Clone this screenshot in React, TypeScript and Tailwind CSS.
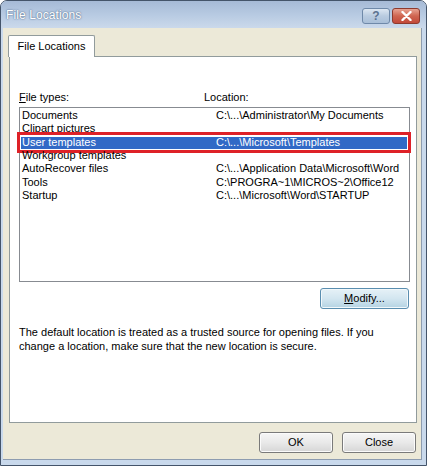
import React from "react";

const rows: [string, string][] = [
  ["Documents", "C:\\...\\Administrator\\My Documents"],
  ["Clipart pictures", ""],
  ["User templates", "C:\\...\\Microsoft\\Templates"],
  ["Workgroup templates", ""],
  ["AutoRecover files", "C:\\...\\Application Data\\Microsoft\\Word"],
  ["Tools", "C:\\PROGRA~1\\MICROS~2\\Office12"],
  ["Startup", "C:\\...\\Microsoft\\Word\\STARTUP"],
];

function Btn({ children, w, hot }: { children: React.ReactNode; w: string; hot?: boolean }) {
  return (
    <div
      className={
        "h-[21px] flex items-center justify-center rounded-[3px] border text-[11px] text-black " +
        w +
        (hot
          ? " border-[#5a8eb0] bg-gradient-to-b from-[#e6f1f7] via-[#d3e6f0] to-[#b4d3e3] shadow-[inset_0_0_0_1px_#f2f8fb]"
          : " border-[#7a7a7a] bg-gradient-to-b from-[#f6f6f6] via-[#e9e9e9] to-[#d6d6d6] shadow-[inset_0_0_0_1px_#fbfbfb]")
      }
    >
      {children}
    </div>
  );
}

export default function App() {
  return (
    <div
      className="w-[427px] h-[466px] flex flex-col border border-[#44546a] rounded-t-[7px] overflow-hidden bg-[#c9d9ec]"
      style={{ fontFamily: '"Liberation Sans", Arial, sans-serif' }}
    >
      {/* title bar */}
      <div className="h-[27px] shrink-0 flex items-center pl-[5px] pr-[6px] bg-gradient-to-b from-[#a6bad6] via-[#b7cae2] to-[#cbd9eb]">
        <span className="text-[12px] text-white [text-shadow:0_0_2px_#5b7596,0_0_1px_#5b7596] tracking-[0.1px]">
          File Locations
        </span>
        <div className="ml-auto flex gap-[2px] mt-[2px]">
          <div className="w-[28px] h-[16px] rounded-[3px] border border-[#6f89a9] bg-gradient-to-b from-[#dde7f2] via-[#b9cbe0] to-[#a9bfd8] flex items-center justify-center text-[12px] font-bold text-[#5c7290] leading-none">
            ?
          </div>
          <div className="w-[28px] h-[16px] rounded-[3px] border border-[#8e3a2e] bg-gradient-to-b from-[#e7a393] via-[#cf6550] to-[#c2493a] flex items-center justify-center">
            <svg width="11" height="10" viewBox="0 0 11 10">
              <path d="M1.5 1 L9.5 9 M9.5 1 L1.5 9" stroke="#ffffff" strokeWidth="2.4" strokeLinecap="round" />
            </svg>
          </div>
        </div>
      </div>

      {/* frame + body */}
      <div className="flex-1 flex pl-[2px] pr-[4px] pb-[5px]">
        <div className="flex-1 flex flex-col bg-[#ece9d8] border-r border-b border-[#8d9cb0] pt-[7px] pl-[5px] pr-[4px]">
          {/* tab */}
          <div className="flex">
            <div className="relative z-10 w-[87px] h-[22px] -mb-[1px] bg-white border border-b-0 border-[#919b9c] rounded-t-[2px] flex items-center justify-center text-[11px] text-black">
              File Locations
            </div>
          </div>
          {/* panel */}
          <div className="ml-[1px] w-[408px] h-[367px] bg-white border border-[#919b9c] pt-[34px] pl-[9px] pr-[6px] flex flex-col">
            <div className="flex h-[13px] leading-[13px] text-[11px] text-black">
              <span className="w-[185px]">
                <span className="underline">F</span>ile types:
              </span>
              <span>Location:</span>
            </div>
            <div className="mt-[3px] w-[391px] h-[175px] border border-[#878b91] pt-[1px] text-[11px]">
              {rows.map(([a, b], i) => {
                const sel = i === 2;
                return (
                  <div key={a} className="relative h-[13.33px] leading-[13.33px]">
                    {sel && (
                      <div className="absolute left-[1px] right-[2px] top-[1px] bottom-0 bg-[#3169c6]" />
                    )}
                    <div className={"relative flex pl-[2px] " + (sel ? "text-white" : "text-black")}>
                      <span className="w-[194px] shrink-0">{a}</span>
                      <span>{b}</span>
                    </div>
                    {sel && (
                      <div className="absolute -left-[3px] -right-[2px] -top-[4px] -bottom-[4px] border-[3px] border-[#de2127]" />
                    )}
                  </div>
                );
              })}
            </div>
            <div className="flex justify-end mt-[6px] pr-[1px]">
              <Btn w="w-[89px]" hot>
                <span>
                  <span className="underline">M</span>odify...
                </span>
              </Btn>
            </div>
            <div className="mt-[16px] text-[11px] leading-[14px] text-black">
              <div>The default location is treated as a trusted source for opening files. If you</div>
              <div>change a location, make sure that the new location is secure.</div>
            </div>
          </div>
          {/* buttons */}
          <div className="flex justify-end gap-[9px] mt-[9px] pr-[1px]">
            <Btn w="w-[74px]">OK</Btn>
            <Btn w="w-[74px]">Close</Btn>
          </div>
        </div>
      </div>
    </div>
  );
}
